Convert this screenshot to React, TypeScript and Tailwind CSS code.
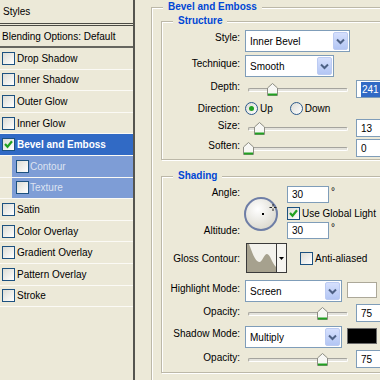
import React from 'react';

type Effect = { name: string; checked?: boolean; selected?: boolean; sub?: boolean };

const effects: Effect[] = [
  { name: 'Drop Shadow' },
  { name: 'Inner Shadow' },
  { name: 'Outer Glow' },
  { name: 'Inner Glow' },
  { name: 'Bevel and Emboss', checked: true, selected: true },
  { name: 'Contour', sub: true },
  { name: 'Texture', sub: true },
  { name: 'Satin' },
  { name: 'Color Overlay' },
  { name: 'Gradient Overlay' },
  { name: 'Pattern Overlay' },
  { name: 'Stroke' },
];

function Box({ checked }: { checked?: boolean }) {
  return (
    <span className="flex h-[13px] w-[13px] shrink-0 items-center justify-center border border-[#1c5180] bg-[linear-gradient(135deg,#dcdcd5,#ffffff)]">
      {checked && (
        <svg width="9" height="9" viewBox="0 0 9 9">
          <path d="M1 4 L3.5 6.8 L8 1.2" fill="none" stroke="#21a121" strokeWidth="2.2" />
        </svg>
      )}
    </span>
  );
}

function Radio({ on }: { on?: boolean }) {
  return (
    <span className="flex h-[13px] w-[13px] shrink-0 items-center justify-center rounded-full border border-[#2c5a8c] bg-[linear-gradient(135deg,#dcdcd5,#ffffff)]">
      {on && <span className="h-[5px] w-[5px] rounded-full bg-[#21a121]" />}
    </span>
  );
}

function Select({ value, className }: { value: string; className: string }) {
  return (
    <div className={`flex h-[22px] shrink-0 items-center border border-[#7f9db9] bg-white pl-[4px] pr-[1px] ${className}`}>
      <span className="flex-1">{value}</span>
      <span className="flex h-[18px] w-[15px] items-center justify-center rounded-[2px] border border-[#bccbf2] bg-[linear-gradient(180deg,#d6e0fd,#b3c6f4)]">
        <svg width="9" height="7" viewBox="0 0 9 7">
          <path d="M1 1.5 L4.5 5 L8 1.5" fill="none" stroke="#4d6185" strokeWidth="2" />
        </svg>
      </span>
    </div>
  );
}

function NumBox({ value, selected, className = 'h-[18px] w-[30px]' }: { value: string; selected?: boolean; className?: string }) {
  return (
    <div className={`flex shrink-0 items-center border border-[#7f9db9] bg-white pl-[4px] ${className}`}>
      {selected ? <span className="bg-[#316ac5] px-[1px] text-white">{value}</span> : value}
    </div>
  );
}

function Slider({ thumb }: { thumb: number }) {
  return (
    <div className="relative h-[18px] w-[103px] shrink-0">
      <div className="absolute left-[3px] right-0 top-[8px] h-[4px] rounded-full border border-[#a5a49e] border-b-white border-r-white bg-[#e4e3dc]" />
      <svg className="absolute top-[3px]" style={{ left: thumb - 5.5 }} width="11" height="13" viewBox="0 0 11 13">
        <path d="M5.5 0.5 L10.5 5 V12.5 H0.5 V5 Z" fill="#f7f7f4" stroke="#8c8c82" />
        <path d="M1 11.5 H10" stroke="#21a121" strokeWidth="2" />
      </svg>
    </div>
  );
}

function Label({ children, className = '' }: { children: React.ReactNode; className?: string }) {
  return <span className={`w-[78px] shrink-0 text-right leading-[13px] ${className}`}>{children}</span>;
}

function Legend({ children }: { children: React.ReactNode }) {
  return (
    <span className="-mt-[8px] block w-fit bg-[#ece9d8] px-[5px] text-[10px] font-bold leading-[13px] text-[#0046d5]">
      {children}
    </span>
  );
}

function Dial() {
  return (
    <svg width="34" height="34" viewBox="0 0 34 34">
      <defs>
        <radialGradient id="dialFill" cx="40%" cy="35%" r="65%">
          <stop offset="0" stopColor="#ffffff" />
          <stop offset="1" stopColor="#dcdad0" />
        </radialGradient>
      </defs>
      <circle cx="17" cy="17" r="16" fill="url(#dialFill)" stroke="#6e7ea6" strokeWidth="2" />
      <rect x="18" y="16" width="2" height="2" fill="#000" />
      <g stroke="#222" strokeWidth="1">
        <path d="M29 7 V9.5 M29 11.5 V14 M25.5 10.5 H28 M30 10.5 H32.5" />
      </g>
    </svg>
  );
}

function ContourSwatch() {
  return (
    <div className="ml-[6px] flex h-[30px] w-[41px] shrink-0 border border-[#3a3a3a] bg-[#f3f2ec]">
      <svg width="29" height="28" viewBox="0 0 29 28">
        <path d="M0 0 L2 0 C5 8 8 17 12 18 C15 19 17 10 20 10 C23 10 25 19 29 23 L29 28 L0 28 Z" fill="#a6a18e" />
      </svg>
      <div className="flex flex-1 items-center justify-center border-l border-[#3a3a3a] bg-[#f6f5f0]">
        <svg width="5" height="3" viewBox="0 0 5 3">
          <path d="M0 0 H5 L2.5 3 Z" fill="#000" />
        </svg>
      </div>
    </div>
  );
}

export default function App() {
  return (
    <div className="flex h-[380px] w-[380px] overflow-hidden bg-[#ece9d8] font-['Liberation_Sans',Arial,sans-serif] text-[10px] text-black">
      {/* styles list */}
      <div className="flex w-[135px] shrink-0 flex-col border-r-2 border-[#55554f]">
        <div className="flex h-[26px] items-center border-b-[3px] border-double border-[#4b4b45] pl-[3px]">Styles</div>
        <div className="flex h-[22px] items-center border-b-2 border-[#66665f] pl-[2px]">Blending Options: Default</div>
        {effects.map((e) => (
          <div key={e.name} className="h-[21.6px] border-b border-[#fbfaf5]">
            {e.sub ? (
              <div className="ml-[12px] flex h-full items-center gap-[1px] bg-[#7e9dd6] pl-[4px] text-[#dde3f1]">
                <Box />
                {e.name}
              </div>
            ) : (
              <div className={`flex h-full items-center gap-[2px] pl-[2px] ${e.selected ? 'bg-[#316ac5] font-bold text-white' : ''}`}>
                <Box checked={e.checked} />
                {e.name}
              </div>
            )}
          </div>
        ))}
      </div>

      {/* settings */}
      <div className="min-w-0 flex-1 pl-[16px] pt-[7px]">
        <div className="w-[262px] shrink-0 border border-[#bcb8a8] pb-[20px] pl-[9px] shadow-[inset_1px_1px_0_#fff,1px_1px_0_#fff]">
          <div className="ml-[2px]">
            <Legend>Bevel and Emboss</Legend>
          </div>

          <div className="mt-[8px] w-[240px] border border-[#bcb8a8] pb-[2px] shadow-[inset_1px_1px_0_#fff,1px_1px_0_#fff]">
            <div className="ml-[11px]">
              <Legend>Structure</Legend>
            </div>
            <div className="mt-[3px] flex h-[22px] items-start">
              <Label className="mt-[1px]">Style:</Label>
              <Select value="Inner Bevel" className="ml-[5px] w-[105px]" />
            </div>
            <div className="mt-[3px] flex h-[22px] items-start">
              <Label className="mt-[2px]">Technique:</Label>
              <Select value="Smooth" className="ml-[5px] w-[89px]" />
            </div>
            <div className="mt-[3px] flex h-[18px] items-start">
              <Label>Depth:</Label>
              <div className="ml-[5px] flex items-center gap-[8px]">
                <Slider thumb={27.5} />
                <NumBox value="241" selected />
              </div>
            </div>
            <div className="mt-[2px] flex h-[16px] items-center">
              <Label>Direction:</Label>
              <div className="ml-[5px] flex items-center">
                <Radio on />
                <span className="ml-[2px]">Up</span>
                <span className="ml-[17px]">
                  <Radio />
                </span>
                <span className="ml-[2px]">Down</span>
              </div>
            </div>
            <div className="mt-[3px] flex h-[18px] items-start">
              <Label>Size:</Label>
              <div className="ml-[5px] flex items-center gap-[8px]">
                <Slider thumb={14.5} />
                <NumBox value="13" />
              </div>
            </div>
            <div className="mt-[2px] flex h-[18px] items-start">
              <Label>Soften:</Label>
              <div className="ml-[5px] flex items-center gap-[8px]">
                <Slider thumb={3.5} />
                <NumBox value="0" />
              </div>
            </div>
          </div>

          <div className="mt-[16px] w-[240px] border border-[#bcb8a8] pb-[4px] shadow-[inset_1px_1px_0_#fff,1px_1px_0_#fff]">
            <div className="ml-[11px]">
              <Legend>Shading</Legend>
            </div>
            <div className="mt-[4px] flex h-[53px]">
              <div className="flex w-[78px] shrink-0 flex-col items-end">
                <span className="leading-[13px]">Angle:</span>
                <span className="mt-[25px] leading-[13px]">Altitude:</span>
              </div>
              <div className="ml-[4px] mt-[11px]">
                <Dial />
              </div>
              <div className="ml-[9px] flex flex-col">
                <div className="flex h-[17px] items-start">
                  <NumBox value="30" className="h-[17px] w-[42px]" />
                  <span className="ml-[2px] leading-[12px]">°</span>
                </div>
                <div className="mt-[3px] flex h-[15px] items-center gap-[2px]">
                  <Box checked />
                  Use Global Light
                </div>
                <div className="mt-[1px] flex h-[17px] items-start">
                  <NumBox value="30" className="h-[17px] w-[42px]" />
                  <span className="ml-[2px] leading-[12px]">°</span>
                </div>
              </div>
            </div>
            <div className="mt-[4px] flex h-[30px] items-center">
              <Label>Gloss Contour:</Label>
              <ContourSwatch />
              <div className="ml-[13px] flex items-center gap-[2px]">
                <Box />
                Anti-aliased
              </div>
            </div>
            <div className="mt-[7px] flex h-[22px] items-start">
              <Label className="mt-[2px]">Highlight Mode:</Label>
              <Select value="Screen" className="ml-[5px] w-[97px]" />
              <div className="ml-[5px] mt-[2px] h-[16px] w-[30px] shrink-0 border border-[#aca899] bg-white" />
            </div>
            <div className="mt-[2px] flex h-[18px] items-start">
              <Label className="mt-[1px]">Opacity:</Label>
              <div className="ml-[5px] flex items-center gap-[8px]">
                <Slider thumb={77.5} />
                <NumBox value="75" />
              </div>
            </div>
            <div className="mt-[4px] flex h-[22px] items-start">
              <Label className="mt-[1px]">Shadow Mode:</Label>
              <Select value="Multiply" className="ml-[5px] w-[97px]" />
              <div className="ml-[5px] mt-[2px] h-[16px] w-[30px] shrink-0 border border-[#6b6b6b] bg-black" />
            </div>
            <div className="mt-[2px] flex h-[18px] items-start">
              <Label className="mt-[1px]">Opacity:</Label>
              <div className="ml-[5px] flex items-center gap-[8px]">
                <Slider thumb={77.5} />
                <NumBox value="75" />
              </div>
            </div>
          </div>
        </div>
      </div>
    </div>
  );
}
